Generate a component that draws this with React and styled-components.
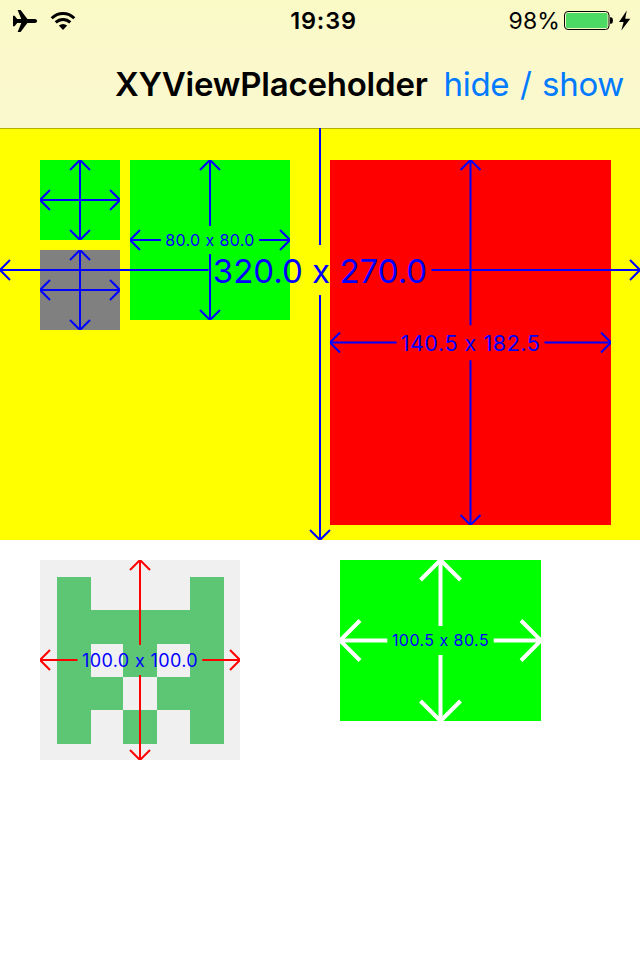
import React from "react";
import styled, { createGlobalStyle } from "styled-components";

const GlobalStyle = createGlobalStyle`
  * { box-sizing: border-box; }
  body { margin: 0; background: #fff; font-family: Inter, sans-serif; font-variant-ligatures: no-contextual; }
`;

const Screen = styled.main`
  width: 640px;
  height: 960px;
  overflow: hidden;
  background: #fff;
`;

const TopBar = styled.header`
  height: 128px;
  background: linear-gradient(#fafac6, #fbf8cc 50%, #faf8ce);
`;

const StatusBar = styled.div`
  height: 40px;
  display: grid;
  grid-template-columns: 1fr auto 1fr;
  align-items: center;
  padding: 1px 9px 0 12px;
  color: #000;
`;

const Signals = styled.div`
  display: flex;
  align-items: center;
  gap: 12px;
`;

const Clock = styled.time`
  font-size: 23.5px;
  font-weight: 600;
  line-height: 40px;
  letter-spacing: 0.8px;
  margin-left: 4px;
`;

const Power = styled.div`
  display: flex;
  align-items: center;
  justify-content: flex-end;
`;

const Percent = styled.span`
  font-size: 23px;
  line-height: 40px;
  letter-spacing: 0.1px;
  margin-right: 4px;
`;

const NavBar = styled.nav`
  height: 88px;
  display: flex;
  align-items: center;
  justify-content: flex-end;
  gap: 16px;
  padding-right: 16px;
`;

const Title = styled.h1`
  margin: 0;
  font-size: 33px;
  line-height: 40px;
  font-weight: 600;
  letter-spacing: -0.22px;
  white-space: nowrap;
`;

const NavButton = styled.button`
  border: 0;
  padding: 0;
  background: none;
  color: #007aff;
  font: 400 33px/40px Inter, sans-serif;
  letter-spacing: -0.3px;
  word-spacing: 1.6px;
  white-space: nowrap;
`;

const Stage = styled.section`
  position: relative;
  height: 412px;
  background: #ff0;
  box-shadow: inset 0 1px 0 #b2b200;
  display: flex;
  align-items: flex-start;
  gap: 10px;
  padding: 32px 29px 15px 40px;
`;

const Stack = styled.div`
  display: flex;
  flex-direction: column;
  gap: 10px;
`;

const Gallery = styled.section`
  display: flex;
  align-items: flex-start;
  gap: 100px;
  padding: 20px 40px;
`;

const Box = styled.div`
  display: grid;
  place-items: center;
  flex: none;
  width: ${(p) => p.$w}px;
  height: ${(p) => p.$h}px;
  margin-left: ${(p) => p.$push || 0}px;
  background: ${(p) => p.$fill};

  > * { grid-area: 1 / 1; }
`;

const StageMeasure = styled.div`
  position: absolute;
  left: 0;
  bottom: 0;
  width: 640px;
  height: 540px;
  display: grid;
  place-items: center;
  clip-path: inset(128px 0 0 0);
  pointer-events: none;

  > * { grid-area: 1 / 1; }
`;

const Drawing = styled.svg`
  display: block;
  fill: none;
`;

const Label = styled.span`
  color: #00f;
  font-size: ${(p) => p.$size}px;
  line-height: 1;
  letter-spacing: ${(p) => p.$track}px;
  padding-top: ${(p) => p.$drop || 0}px;
  padding-bottom: ${(p) => p.$lift || 0}px;
  white-space: nowrap;
`;

function Arrows({ w, h, color = "#00f", stroke = 2, head = 10, gapX, gapY }) {
  const cx = w / 2;
  const cy = h / 2;
  const [x1, x2] = gapX || [cx, cx];
  const [y1, y2] = gapY || [cy, cy];
  return (
    <Drawing width={w} height={h} stroke={color} strokeWidth={stroke}>
      <path d={`M0 ${cy}H${x1}M${x2} ${cy}H${w}M${cx} 0V${y1}M${cx} ${y2}V${h}`} />
      <path d={`M${head} ${cy - head}L0 ${cy}L${head} ${cy + head}`} />
      <path d={`M${w - head} ${cy - head}L${w} ${cy}L${w - head} ${cy + head}`} />
      <path d={`M${cx - head} ${head}L${cx} 0L${cx + head} ${head}`} />
      <path d={`M${cx - head} ${h - head}L${cx} ${h}L${cx + head} ${h - head}`} />
    </Drawing>
  );
}

const FACE = ["X...X", "XXXXX", "X.X.X", "XX.XX", "X.X.X"];
const COLS = [17, 50.5, 83.4, 117, 150, 184];
const ROWS = [17, 50, 84, 117, 150, 184];

function Identicon() {
  return (
    <Drawing width="200" height="200">
      <g fill="#5dc674" shapeRendering="crispEdges">
        {FACE.flatMap((row, r) =>
          [...row].map((cell, c) =>
            cell === "X" ? (
              <rect
                key={`${r}-${c}`}
                x={COLS[c]}
                y={ROWS[r]}
                width={COLS[c + 1] - COLS[c]}
                height={ROWS[r + 1] - ROWS[r]}
              />
            ) : null
          )
        )}
      </g>
    </Drawing>
  );
}

function Airplane() {
  return (
    <Drawing width="26" height="24" viewBox="0 0 26 24">
      <path
        fill="#000"
        d="M1 6.8H2.6L5.2 10H9.3L5.6 1H8.6L15.4 10H23Q25.2 10.3 25.2 12Q25.2 13.7 23 14H15.4L8.6 23H5.6L9.3 14H5.2L2.6 17.2H1Z"
      />
    </Drawing>
  );
}

function Wifi() {
  return (
    <Drawing width="26" height="20" viewBox="0 0 26 20" stroke="#000" strokeWidth="3">
      <path d="M1.7 7.2Q6.5 2.5 13 2.5T24.3 7.2" />
      <path d="M5.7 11.4Q8.8 8.4 13 8.4T20.3 11.4" />
      <path d="M8.8 14.6Q13 11.2 17.2 14.6L13 19Z" fill="#000" stroke="none" />
    </Drawing>
  );
}

function Battery() {
  return (
    <Drawing width="67" height="22" viewBox="0 0 67 22">
      <rect x="0.5" y="1.5" width="44.5" height="18" rx="3.5" stroke="#000" />
      <rect x="2" y="3" width="41.5" height="15" rx="1.5" fill="#4cd964" />
      <path d="M46 7.2H47.2Q49 7.5 49 10.5T47.2 13.8H46Z" fill="#000" />
      <path d="M62.8 0.5L55 12H59.6L57.3 20.5L66.3 8.7H61.2Z" fill="#000" />
    </Drawing>
  );
}

export default function App() {
  return (
    <Screen>
      <GlobalStyle />
      <TopBar>
        <StatusBar>
          <Signals>
            <Airplane />
            <Wifi />
          </Signals>
          <Clock>19:39</Clock>
          <Power>
            <Percent>98%</Percent>
            <Battery />
          </Power>
        </StatusBar>
        <NavBar>
          <Title>XYViewPlaceholder</Title>
          <NavButton>hide / show</NavButton>
        </NavBar>
      </TopBar>

      <Stage>
        <Stack>
          <Box $w={80} $h={80} $fill="#0f0">
            <Arrows w={80} h={80} />
          </Box>
          <Box $w={80} $h={80} $fill="#808080">
            <Arrows w={80} h={80} />
          </Box>
        </Stack>
        <Box $w={160} $h={160} $fill="#0f0">
          <Arrows w={160} h={160} gapX={[31, 129]} gapY={[66, 94]} />
          <Label $size={16} $track={0.38}>80.0 x 80.0</Label>
        </Box>
        <Box $w={281} $h={365} $push={30} $fill="#f00">
          <Arrows w={281} h={365} gapX={[66.5, 214.5]} gapY={[165.3, 200.3]} />
          <Label $size={21.5} $track={0.55} $drop={3}>140.5 x 182.5</Label>
        </Box>
        <StageMeasure>
          <Arrows w={640} h={540} gapX={[208.5, 431.5]} gapY={[245, 295]} />
          <Label $size={33} $track={0} $drop={2}>320.0 x 270.0</Label>
        </StageMeasure>
      </Stage>

      <Gallery>
        <Box $w={200} $h={200} $fill="#f0f0f0">
          <Identicon />
          <Arrows w={200} h={200} color="#f00" gapX={[37.5, 162.3]} gapY={[85, 115]} />
          <Label $size={18} $track={0.36} $drop={1}>100.0 x 100.0</Label>
        </Box>
        <Box $w={201} $h={161} $fill="#0f0">
          <Arrows
            w={201}
            h={161}
            color="#fff"
            stroke={4}
            head={20}
            gapX={[47.3, 153.7]}
            gapY={[66, 95]}
          />
          <Label $size={16} $track={0.45} $lift={1.5}>100.5 x 80.5</Label>
        </Box>
      </Gallery>
    </Screen>
  );
}
